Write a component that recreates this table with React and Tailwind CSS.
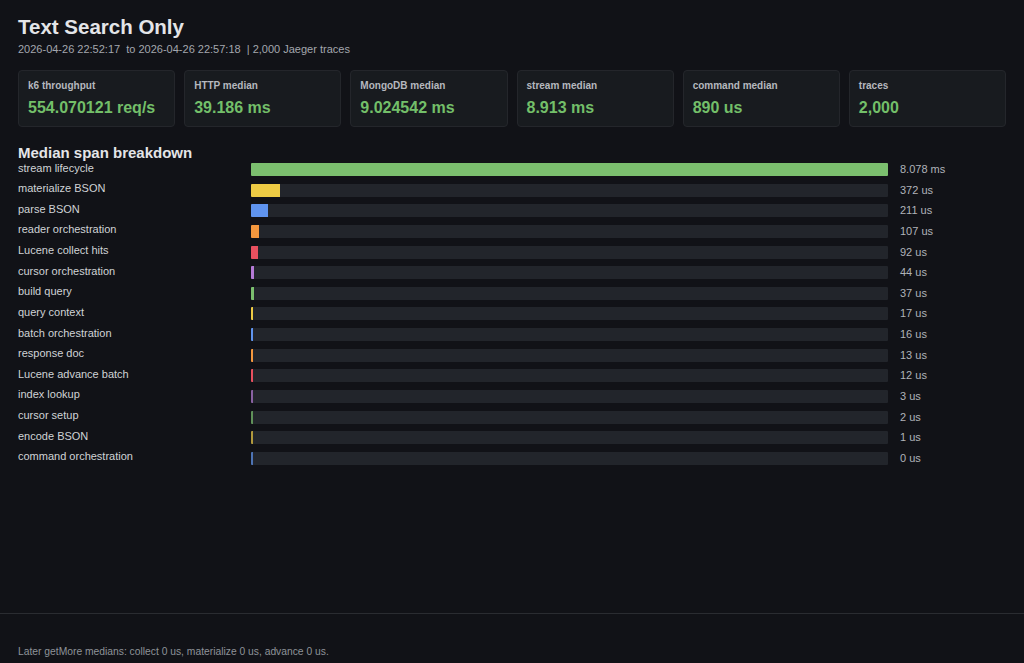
const STATS = [
  { label: 'k6 throughput', value: '554.070121 req/s' },
  { label: 'HTTP median', value: '39.186 ms' },
  { label: 'MongoDB median', value: '9.024542 ms' },
  { label: 'stream median', value: '8.913 ms' },
  { label: 'command median', value: '890 us' },
  { label: 'traces', value: '2,000' },
]

const SPANS = [
  { name: 'stream lifecycle', us: 8078, text: '8.078 ms' },
  { name: 'materialize BSON', us: 372 },
  { name: 'parse BSON', us: 211 },
  { name: 'reader orchestration', us: 107 },
  { name: 'Lucene collect hits', us: 92 },
  { name: 'cursor orchestration', us: 44 },
  { name: 'build query', us: 37 },
  { name: 'query context', us: 17 },
  { name: 'batch orchestration', us: 16 },
  { name: 'response doc', us: 13 },
  { name: 'Lucene advance batch', us: 12 },
  { name: 'index lookup', us: 3 },
  { name: 'cursor setup', us: 2 },
  { name: 'encode BSON', us: 1 },
  { name: 'command orchestration', us: 0 },
]

const COLORS = ['bg-[#7bbf6e]', 'bg-[#eecb44]', 'bg-[#5f94ef]', 'bg-[#f5983e]', 'bg-[#e8505f]', 'bg-[#b57ad6]']

const MAX = 8078

export default function App() {
  return (
    <div className="w-[1024px] h-[663px] bg-[#111217] text-[#d8d9dc] flex flex-col overflow-hidden" style={{ fontFamily: '"Liberation Sans", Arial, sans-serif' }}>
      <div className="flex-1 px-[18px] pt-[15px]">
        <h1 className="text-[20.5px] leading-[24px] font-bold text-[#e4e5e8]">Text Search Only</h1>
        <div className="text-[11px] leading-[14px] text-[#a4a7ae] mt-[3px] whitespace-pre">
          2026-04-26 22:52:17  to 2026-04-26 22:57:18  | 2,000 Jaeger traces
        </div>

        <div className="grid grid-cols-6 gap-[9px] mt-[14px]">
          {STATS.map(s => (
            <div key={s.label} className="h-[57px] bg-[#181b1f] border border-[#24262b] rounded-[4px] px-[9px] pt-[9px]">
              <div className="text-[10px] leading-[12px] font-bold text-[#b5b8be]">{s.label}</div>
              <div className="text-[16px] leading-[20px] font-bold text-[#73bf69] mt-[6px]">{s.value}</div>
            </div>
          ))}
        </div>

        <h2 className="text-[15px] leading-[18px] font-bold text-[#e4e5e8] mt-[17px]">Median span breakdown</h2>
        <div className="flex flex-col gap-[7.64px] mt-[1px]">
          {SPANS.map((s, i) => {
            const pct = Math.max((s.us / MAX) * 100, 0.3)
            return (
              <div key={s.name} className="flex items-center h-[13px]">
                <div className="w-[233px] text-[11px] leading-[13px] text-[#d0d2d6] -mt-[3px]">{s.name}</div>
                <div className="w-[637px] h-[13px] bg-[#22252b] rounded-[1px] overflow-hidden">
                  <div className={`h-full ${COLORS[i % 6]} ${s.us < 5 ? 'opacity-70' : ''}`} style={{ width: `${pct}%` }} />
                </div>
                <div className="ml-[12px] text-[11px] leading-[13px] text-[#b0b3b9]">{s.text || `${s.us} us`}</div>
              </div>
            )
          })}
        </div>
      </div>

      <div className="border-t border-[#2a2c31] h-[50px] px-[18px] pt-[32px]">
        <div className="text-[10.3px] leading-[12px] text-[#8e9299]">Later getMore medians: collect 0 us, materialize 0 us, advance 0 us.</div>
      </div>
    </div>
  )
}
